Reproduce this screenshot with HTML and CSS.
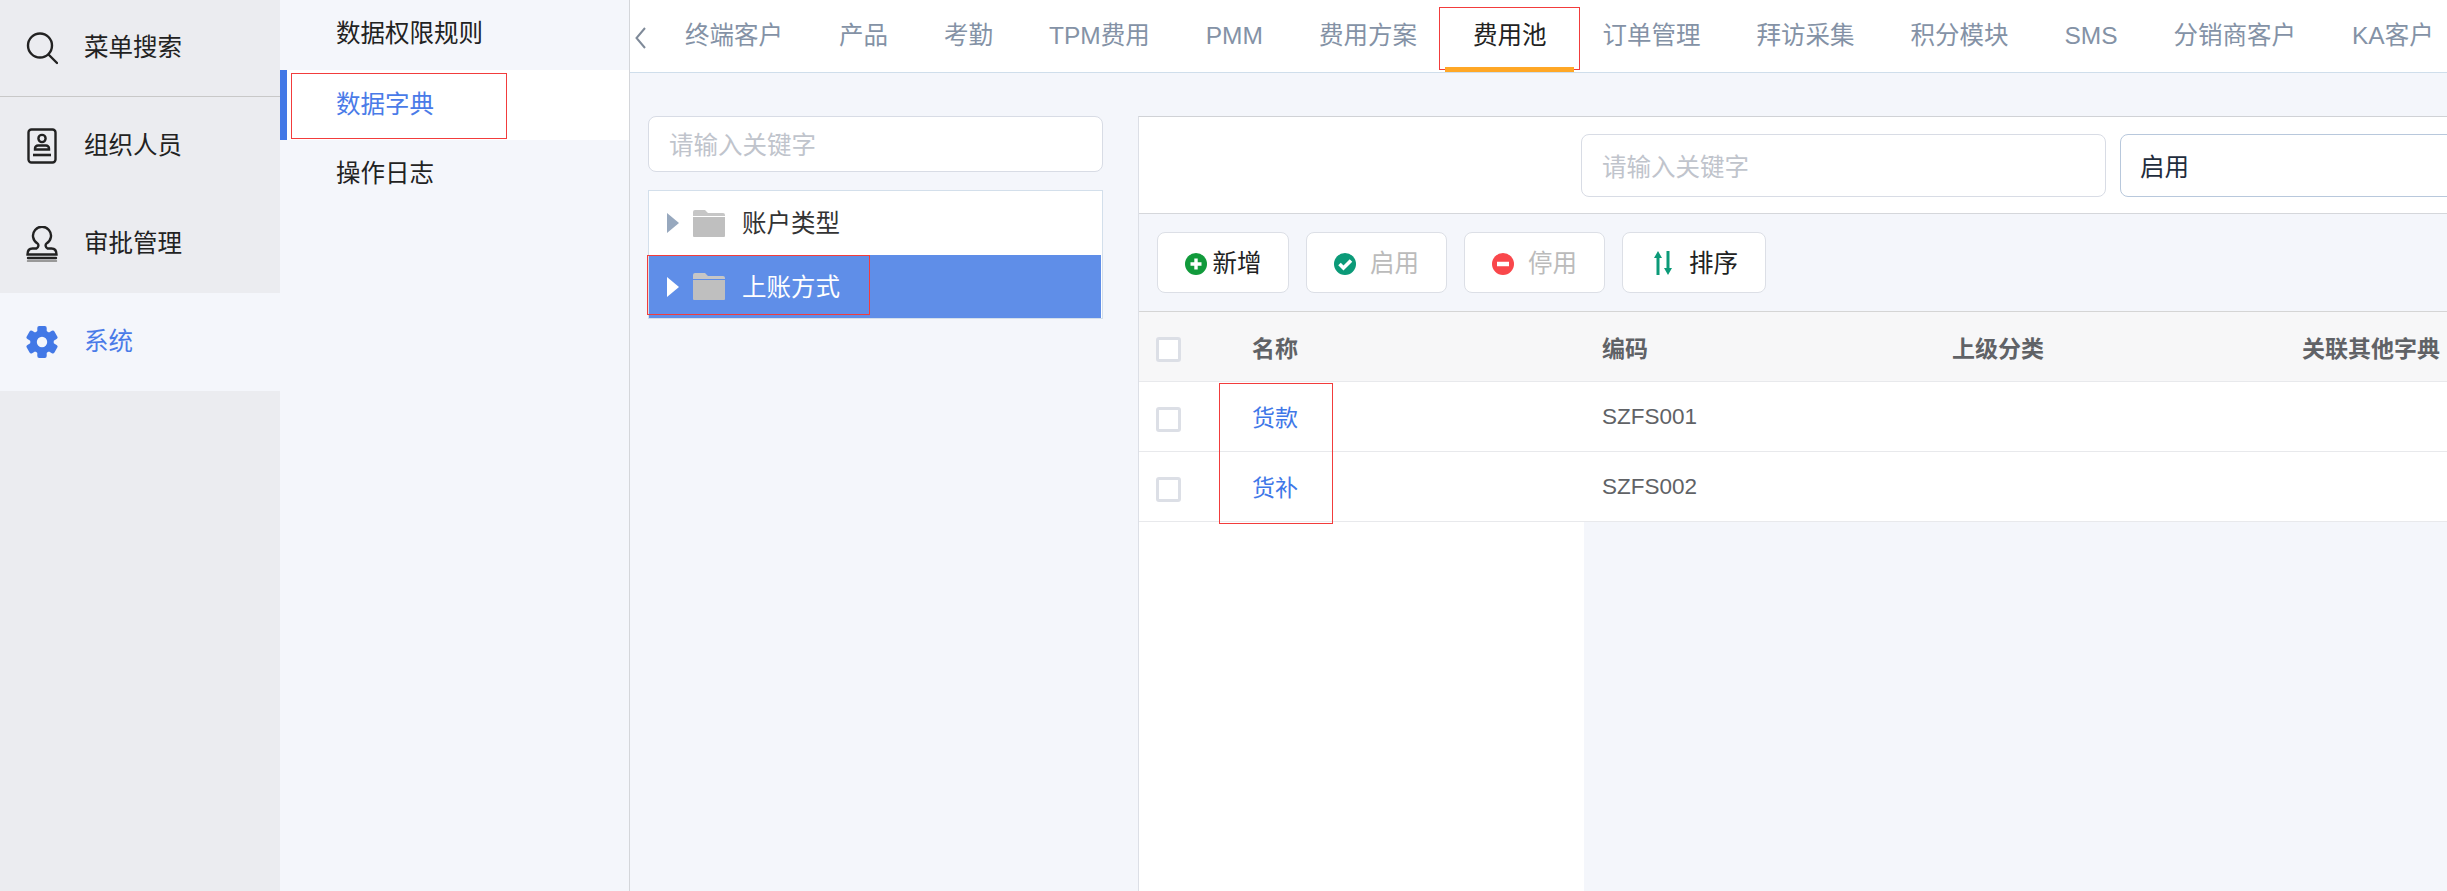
FILE: index.html
```html
<!DOCTYPE html>
<html lang="zh-CN">
<head>
  <meta charset="UTF-8">
  <title>数据字典</title>
  <link rel="stylesheet" href="styles.css">
</head>
<body>
  <!-- 一级菜单 -->
  <aside class="sidebar">
    <div class="side-item side-search">
      <svg class="side-icon" viewBox="0 0 32 32" fill="none" stroke="#222" stroke-width="2.4" stroke-linecap="round"><circle cx="14" cy="13.5" r="12"/><path d="M23 23l8 8"/></svg>
      <span>菜单搜索</span>
    </div>
    <div class="side-item">
      <svg class="side-icon" viewBox="0 0 32 36" fill="none" stroke="#222" stroke-width="2.4"><rect x="2.5" y="1.5" width="27" height="33" rx="3"/><circle cx="16" cy="10.5" r="3.6"/><path d="M9 21.5v-1a3 3 0 0 1 3-3h8a3 3 0 0 1 3 3v1z"/><path d="M7 27h18" stroke-width="2.6"/></svg>
      <span>组织人员</span>
    </div>
    <div class="side-item">
      <svg class="side-icon" viewBox="0 0 32 36" fill="none" stroke="#222" stroke-width="2.4" stroke-linecap="round"><path d="M11.5 17.5a9 9 0 1 1 9 0c-1.500 1-1 4 1 5h4q5 0 5 6H1.500q0-6 5-6h4c2-1 2.500-4 1-5z"/><path d="M2 32h28"/><path d="M2 35h28" stroke="#999"/></svg>
      <span>审批管理</span>
    </div>
    <div class="side-item side-active">
      <svg class="side-icon" viewBox="0 0 34 34" fill="#4278e6">
        <circle cx="17" cy="17" r="12.500"/>
        <rect x="12" y="0" width="10" height="8" rx="2"/>
        <rect x="12" y="0" width="10" height="8" rx="2" transform="rotate(60 17 17)"/>
        <rect x="12" y="0" width="10" height="8" rx="2" transform="rotate(120 17 17)"/>
        <rect x="12" y="0" width="10" height="8" rx="2" transform="rotate(180 17 17)"/>
        <rect x="12" y="0" width="10" height="8" rx="2" transform="rotate(240 17 17)"/>
        <rect x="12" y="0" width="10" height="8" rx="2" transform="rotate(300 17 17)"/>
        <circle cx="17" cy="17" r="5.500" fill="#f4f6fb"/>
      </svg>
      <span>系统</span>
    </div>
  </aside>

  <!-- 二级菜单 -->
  <nav class="subnav">
    <div class="subnav-item">数据权限规则</div>
    <div class="subnav-item subnav-active">数据字典<i class="mark mark-subnav"></i></div>
    <div class="subnav-item">操作日志</div>
  </nav>

  <div class="main">
    <div class="tabs">
      <svg class="tabs-prev" viewBox="0 0 11 22" fill="none" stroke="#7f8a99" stroke-width="2"><path d="M10 1L1.500 11 10 21"/></svg>
      <div class="tab">终端客户</div>
      <div class="tab">产品</div>
      <div class="tab">考勤</div>
      <div class="tab">TPM费用</div>
      <div class="tab">PMM</div>
      <div class="tab">费用方案</div>
      <div class="tab tab-active">费用池<i class="mark mark-tab"></i></div>
      <div class="tab">订单管理</div>
      <div class="tab">拜访采集</div>
      <div class="tab">积分模块</div>
      <div class="tab">SMS</div>
      <div class="tab">分销商客户</div>
      <div class="tab">KA客户</div>
    </div>

    <div class="content">
      <!-- 左侧分类树 -->
      <section class="tree-col">
        <div class="field tree-search placeholder">请输入关键字</div>
        <ul class="tree">
          <li class="tree-row">
            <i class="arrow"></i>
            <svg class="folder" viewBox="0 0 32 27"><path d="M0 2a2 2 0 0 1 2-2h10l3 3h15a2 2 0 0 1 2 2v1H0z" fill="#c6c6c6"/><path d="M0 7h32v19a1 1 0 0 1-1 1H1a1 1 0 0 1-1-1z" fill="#bfbfbf"/></svg>
            <span>账户类型</span>
          </li>
          <li class="tree-row tree-active">
            <i class="arrow"></i>
            <svg class="folder" viewBox="0 0 32 27"><path d="M0 2a2 2 0 0 1 2-2h10l3 3h15a2 2 0 0 1 2 2v1H0z" fill="#c6c6c6"/><path d="M0 7h32v19a1 1 0 0 1-1 1H1a1 1 0 0 1-1-1z" fill="#bfbfbf"/></svg>
            <span>上账方式</span>
            <i class="mark mark-tree"></i>
          </li>
        </ul>
      </section>

      <!-- 右侧字典列表 -->
      <section class="panel">
        <div class="filters">
          <div class="field filter-field placeholder">请输入关键字</div>
          <div class="field filter-field filter-select">启用</div>
        </div>
        <div class="toolbar">
          <button class="btn btn-add">
            <svg class="btn-icon" viewBox="0 0 22 22"><circle cx="11" cy="11" r="11" fill="#119a3b"/><path d="M11 5.500v11M5.500 11h11" stroke="#fff" stroke-width="3.400"/></svg>
            新增
          </button>
          <button class="btn btn-off">
            <svg class="btn-icon" viewBox="0 0 22 22"><circle cx="11" cy="11" r="11" fill="#0b9a78"/><path d="M5.500 11l4 4L17 7.500" fill="none" stroke="#fff" stroke-width="3.600"/></svg>
            启用
          </button>
          <button class="btn btn-off">
            <svg class="btn-icon" viewBox="0 0 22 22"><circle cx="11" cy="11" r="11" fill="#f9474b"/><path d="M5 11h12" stroke="#fff" stroke-width="4.500"/></svg>
            停用
          </button>
          <button class="btn btn-sort">
            <svg class="btn-icon-sort" viewBox="0 0 18 24" fill="#0b9a78"><path d="M2.500 24V7H0l4-7 4 7H5.500v17z"/><path d="M12.500 0v17H10l4 7 4-7h-2.500V0z"/></svg>
            排序
          </button>
        </div>

        <div class="table-row table-head">
          <div class="cell-check"><i class="checkbox"></i></div>
          <div class="cell">名称</div>
          <div class="cell">编码</div>
          <div class="cell">上级分类</div>
          <div class="cell">关联其他字典</div>
        </div>
        <div class="table-body">
          <div class="table-row">
            <div class="cell-check"><i class="checkbox"></i></div>
            <div class="cell cell-link">货款</div>
            <div class="cell">SZFS001</div>
            <div class="cell"></div>
            <div class="cell"></div>
          </div>
          <div class="table-row">
            <div class="cell-check"><i class="checkbox"></i></div>
            <div class="cell cell-link">货补</div>
            <div class="cell">SZFS002</div>
            <div class="cell"></div>
            <div class="cell"></div>
          </div>
          <i class="mark mark-table"></i>
        </div>
        <div class="table-fixed-fill"></div>
      </section>
    </div>
  </div>
</body>
</html>
```

FILE: styles.css
```css
* {
  box-sizing: border-box;
}

body {
  margin: 0;
  height: 100vh;
  display: flex;
  overflow: hidden;
  font-family: "Liberation Sans", "Noto Sans CJK SC", sans-serif;
  font-size: 24.5px;
  color: #222;
  background: #f4f6fb;
}

/* 批注红框 */
.mark {
  position: absolute;
  border: 1px solid #f23c3c;
  pointer-events: none;
}

.mark-subnav {
  left: 4px;
  top: 3px;
  width: 216px;
  height: 66px;
}

.mark-tab {
  left: -6px;
  top: 7px;
  width: 141px;
  height: 63px;
}

.mark-tree {
  left: -2px;
  top: 0;
  width: 223px;
  height: 60px;
}

.mark-table {
  left: 80px;
  top: 1px;
  width: 114px;
  height: 141px;
}

/* 一级菜单 */
.sidebar {
  flex: 0 0 280px;
  background: #ebecf0;
}

.side-item {
  height: 98px;
  display: flex;
  align-items: center;
  padding-left: 26px;
}

.side-item span {
  padding-bottom: 5px;
}

.side-search {
  height: 97px;
  border-bottom: 1px solid #c8c8c8;
}

.side-icon {
  width: 32px;
  height: 36px;
  margin-right: 26px;
  flex: none;
}

.side-active {
  background: #f4f6fb;
  color: #4a7be8;
}

/* 二级菜单 */
.subnav {
  flex: 0 0 350px;
  border-right: 1px solid #d4d6da;
}

.subnav-item {
  height: 70px;
  line-height: 68px;
  padding-left: 56px;
}

.subnav-active {
  position: relative;
  background: #fff;
  color: #4a7be8;
  border-left: 7px solid #4278e6;
  padding-left: 49px;
  line-height: 70px;
}

/* 顶部页签 */
.main {
  flex: 1;
  min-width: 0;
  display: flex;
  flex-direction: column;
}

.tabs {
  height: 73px;
  flex: none;
  display: flex;
  background: #fff;
  border-bottom: 1px solid #cfdeeb;
  padding-left: 5px;
  white-space: nowrap;
  overflow: hidden;
}

.tabs-prev {
  width: 11px;
  height: 22px;
  flex: none;
  margin: 27px 11px 0 0;
}

.tab {
  position: relative;
  flex: none;
  height: 72px;
  line-height: 71px;
  padding: 0 28px;
  color: #8492a6;
}

.tab-active {
  color: #222;
}

/* 下划线压在红框上面 */
.tab-active::after {
  content: "";
  position: absolute;
  left: 0;
  right: 0;
  bottom: 0;
  height: 5px;
  background: #ffa726;
}

/* 内容区 */
.content {
  flex: 1;
  min-height: 0;
  display: flex;
  gap: 35px;
  padding: 43px 0 0 18px;
}

.field {
  display: flex;
  align-items: center;
  background: #fff;
  border: 1px solid #d8dce5;
  border-radius: 8px;
}

.placeholder {
  color: #c0c4cc;
}

.tree-col {
  flex: 0 0 455px;
}

.tree-search {
  height: 56px;
  padding: 0 0 2px 20px;
  margin-bottom: 18px;
}

.tree {
  list-style: none;
  margin: 0;
  padding: 0;
  background: #fff;
  border: 1px solid #d3dfeb;
  height: 129px;
}

.tree-row {
  position: relative;
  height: 64px;
  display: flex;
  align-items: center;
  padding-left: 18px;
  color: #333;
}

.tree-row span {
  padding-bottom: 3px;
}

.tree-active {
  height: 63px;
  background: #5f8ee8;
  color: #fff;
  margin-right: 1px;
}

.arrow {
  width: 0;
  height: 0;
  border-left: 12px solid #97a8be;
  border-top: 10.5px solid transparent;
  border-bottom: 10.5px solid transparent;
  margin-right: 14px;
}

.tree-active .arrow {
  border-left-color: #fff;
}

.folder {
  width: 32px;
  height: 27px;
  margin-right: 17px;
}

/* 右侧面板 */
.panel {
  flex: 1;
  min-width: 0;
  display: flex;
  flex-direction: column;
  border-top: 1px solid #d0d2d6;
  border-left: 1px solid #dcdfe6;
  overflow: hidden;
}

.filters {
  height: 97px;
  flex: none;
  display: flex;
  align-items: center;
  gap: 14px;
  padding-left: 442px;
  background: #fff;
  border-bottom: 1px solid #d5d7db;
}

.filter-field {
  flex: 0 0 525px;
  height: 63px;
  padding-left: 20px;
}

.filter-select {
  padding-left: 19px;
  color: #1f2d3d;
  border-color: #b8c8dc;
}

.toolbar {
  height: 98px;
  flex: none;
  display: flex;
  gap: 17px;
  padding: 18px;
  border-bottom: 1px solid #d5d5d5;
}

.btn {
  height: 61px;
  display: flex;
  align-items: center;
  gap: 14px;
  padding: 0 27px 2px;
  font: inherit;
  color: #222;
  background: #fff;
  border: 1px solid #dcdfe6;
  border-radius: 8px;
}

.btn-add {
  gap: 6px;
  padding: 0 26.5px 2px;
}

.btn-off {
  color: #bbb;
}

.btn-sort {
  gap: 17px;
  padding: 0 27px 2px 31px;
}

.btn-icon {
  width: 22px;
  height: 22px;
  margin-top: 4px;
}

.btn-icon-sort {
  width: 18px;
  height: 24px;
  margin-top: 3px;
}

/* 表格 */
.table-body {
  position: relative;
  flex: none;
}

.table-row {
  height: 70px;
  flex: none;
  display: grid;
  grid-template-columns: 95px repeat(4, 350px);
  align-items: center;
  background: #fff;
  border-bottom: 1px solid #e8e9ec;
  font-size: 22.5px;
  color: #606266;
}

.table-head {
  background: #f7f7f8;
  font-size: 23px;
  font-weight: bold;
}

.cell {
  padding-left: 18px;
  white-space: nowrap;
}

.cell-check {
  padding-left: 17px;
}

.cell-link {
  padding-bottom: 2px;
  font-size: 23px;
  color: #3f78e8;
}

.checkbox {
  display: block;
  width: 25px;
  height: 25px;
  margin-top: 5px;
  background: #fff;
  border: 3px solid #dcdfe6;
  border-radius: 3px;
}

.table-fixed-fill {
  flex: 1;
  width: 445px;
  background: #fff;
}
```
